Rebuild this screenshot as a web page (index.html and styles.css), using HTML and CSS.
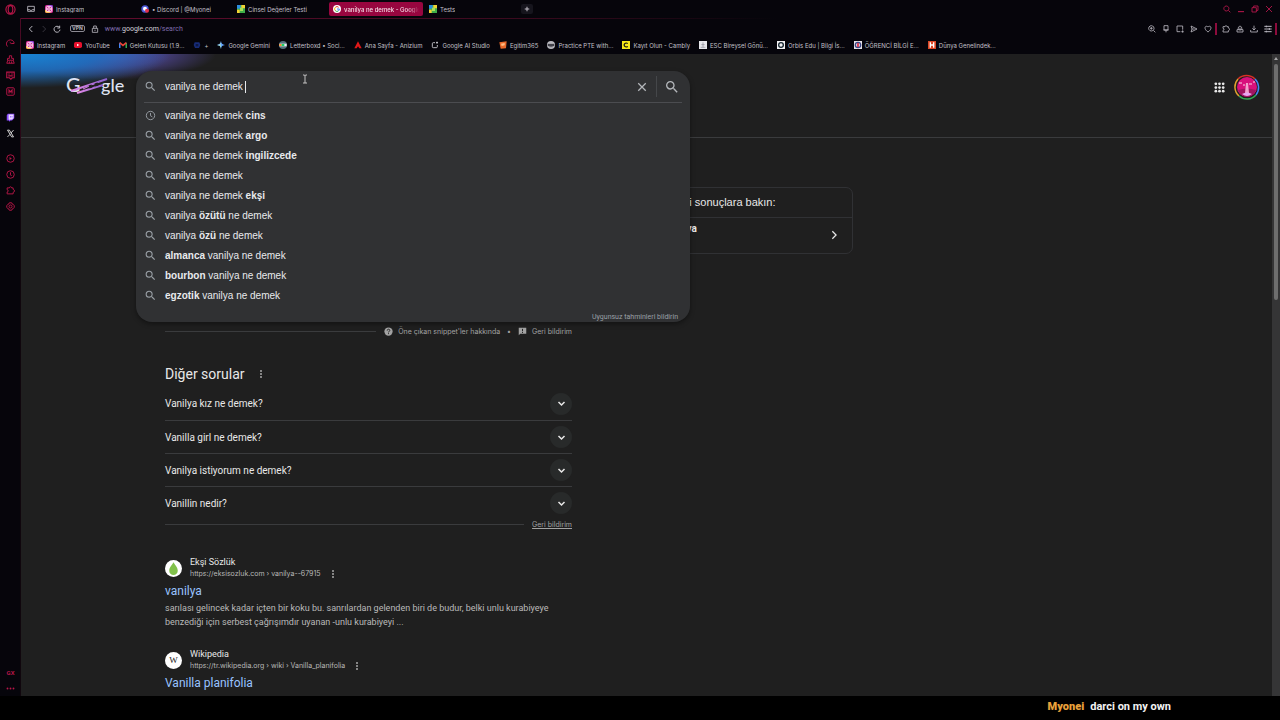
FILE: index.html
```
<!DOCTYPE html>
<html lang="tr">
<head>
    <meta charset="UTF-8">
    <meta name="viewport" content="width=device-width, initial-scale=1.0">
    <title>vanilya ne demek - Google</title>
    <link rel="stylesheet" href="styles.css">
</head>
<body>
    <svg class="sprite" aria-hidden="true">
        <symbol id="i-search" viewBox="0 0 24 24"><path fill="currentColor" d="M15.5 14h-.79l-.28-.27A6.47 6.47 0 0 0 16 9.5 6.5 6.5 0 1 0 9.5 16c1.61 0 3.09-.59 4.23-1.57l.27.28v.79l5 4.99L20.49 19l-4.99-5zm-6 0C7.01 14 5 11.99 5 9.5S7.01 5 9.5 5 14 7.01 14 9.5 11.99 14 9.5 14z"/></symbol>
        <symbol id="i-clock" viewBox="-2 -2 28 28"><g fill="none" stroke="currentColor" stroke-width="2"><circle cx="12" cy="12" r="9"/><path d="M12 6.500v6l4 2.500"/></g></symbol>
        <symbol id="i-down" viewBox="0 0 24 24"><path d="M4 8l8 8 8-8" fill="none" stroke="currentColor" stroke-width="4"/></symbol>
        <symbol id="i-dots" viewBox="0 0 24 24"><g fill="currentColor"><circle cx="12" cy="3" r="3"/><circle cx="12" cy="12" r="3"/><circle cx="12" cy="21" r="3"/></g></symbol>
        <symbol id="i-puzzle" viewBox="0 0 24 24"><path d="M3 5h6c0-4 6-4 6 0h4v4c5 1 5 7 0 8v4H3v-5c4 0 4-6 0-6z" fill="none" stroke="currentColor" stroke-width="2.500"/></symbol>
        <symbol id="i-insta" viewBox="0 0 24 24">
            <rect width="24" height="24" rx="5" fill="#d62f9b"/><path d="M0 14v5a5 5 0 0 0 5 5h14z" fill="#fdb344"/><path d="M8 0h11a5 5 0 0 1 5 5v4z" fill="#8a3bd8"/>
            <g fill="none" stroke="#fff" stroke-width="2.500"><rect x="4" y="4" width="16" height="16" rx="4"/><circle cx="12" cy="12" r="4"/></g>
        </symbol>
        <symbol id="i-test" viewBox="0 0 24 24"><path fill="#3fae49" d="M0 0h24v24H0z"/><path fill="#2b8fe0" d="M0 0h11v11H0z"/><path fill="#f3d233" d="M13 0h11v10H13zM0 14h8v10H0z"/><path fill="#a8e05a" d="M9 8h9v10H9z"/></symbol>
    </svg>

    <div class="browser">
        <nav class="rail" aria-label="Kenar çubuğu">
            <div class="rail-logo">
                <svg viewBox="0 0 24 24"><ellipse cx="12" cy="12" rx="10" ry="10" fill="none" stroke="currentColor" stroke-width="2.500"/><ellipse cx="12" cy="12" rx="5" ry="8.500" fill="none" stroke="currentColor" stroke-width="2.500"/></svg>
            </div>
            <div class="rail-group">
                <button aria-label="GX Control"><svg viewBox="0 0 24 24"><path d="M4 20A10.500 10.500 0 1 1 22 11M22 12h-8l-4-3" fill="none" stroke="currentColor" stroke-width="2.500"/></svg></button>
                <button aria-label="GX Cleaner"><svg viewBox="0 0 24 24"><path d="M9 2h6v7h5v5H4V9h5zM5 14l-3 8h20l-3-8M9 17v5M15 17v5" fill="none" stroke="currentColor" stroke-width="2.500"/></svg></button>
                <button aria-label="Mods"><svg viewBox="0 0 24 24"><path d="M2 3h20v15h-5l-4 4-4-4H2zM6 8h4M14 8h4M6 13h12" fill="none" stroke="currentColor" stroke-width="3"/></svg></button>
                <button aria-label="Aria"><svg viewBox="0 0 24 24"><rect x="2" y="2" width="20" height="20" rx="3" fill="none" stroke="currentColor" stroke-width="2.500"/><path d="M8 17V8l4 5 4-5v9" fill="none" stroke="currentColor" stroke-width="3"/></svg></button>
            </div>
            <div class="rail-group rail-apps">
                <button class="twitch" aria-label="Twitch"><svg viewBox="0 0 24 24"><path d="M5 2h17v12l-6 6h-4l-4 3v-3H2V6z" fill="#8a4dff"/><path d="M7 4h13v9l-4 4h-4l-3 2v-2H7z" fill="#e9dcff"/><path d="M12 8v4M16 8v4" stroke="#8a4dff" stroke-width="2"/></svg></button>
                <button class="x-app" aria-label="X"><svg viewBox="0 0 24 24"><path d="M4 3l11 18h5L9 3zM20 3l-7 8M11 14l-7 7" fill="none" stroke="currentColor" stroke-width="2.500"/></svg></button>
            </div>
            <div class="rail-group rail-tools">
                <button aria-label="Oynatıcı"><svg viewBox="0 0 24 24"><circle cx="12" cy="12" r="10" fill="none" stroke="currentColor" stroke-width="2.500"/><path d="M9.500 8v8l6-4z" fill="currentColor"/></svg></button>
                <button aria-label="Geçmiş"><svg viewBox="0 0 24 24"><g fill="none" stroke="currentColor" stroke-width="2.500"><circle cx="12" cy="12" r="10"/><path d="M12 6v7l3 3"/></g></svg></button>
                <button aria-label="Uzantılar"><svg><use href="#i-puzzle"/></svg></button>
                <button aria-label="Ayarlar"><svg viewBox="0 0 24 24"><path d="M9 2h6l1 3 3 1 3 4v4l-3 4-3 1-1 3H9l-1-3-3-1-3-4v-4l3-4 3-1z" fill="none" stroke="currentColor" stroke-width="2.500"/><circle cx="12" cy="12" r="4" fill="none" stroke="currentColor" stroke-width="2.500"/></svg></button>
            </div>
            <div class="rail-group rail-end">
                <button class="gx" aria-label="GX">GX</button>
                <button aria-label="Diğer"><svg viewBox="0 0 24 24"><g fill="currentColor"><circle cx="4" cy="12" r="2.500"/><circle cx="12" cy="12" r="2.500"/><circle cx="20" cy="12" r="2.500"/></g></svg></button>
            </div>
        </nav>

        <div class="window">
            <div class="tabs">
                <button class="island" aria-label="Sekmeler"><svg viewBox="0 0 24 24"><path d="M2 4h20v15H2zM2 14h6c0 3 8 3 8 0h6" fill="none" stroke="currentColor" stroke-width="2.500"/></svg></button>
                <a class="tab" href="#"><svg><use href="#i-insta"/></svg><span>Instagram</span></a>
                <a class="tab" href="#"><svg viewBox="0 0 24 24"><circle cx="12" cy="12" r="11" fill="#4c58d8"/><circle cx="12" cy="11" r="6" fill="#fff"/><circle cx="18" cy="17" r="6" fill="#e5304a"/></svg><span>• Discord | @Myonei</span></a>
                <a class="tab" href="#"><svg><use href="#i-test"/></svg><span>Cinsel Değerler Testi</span></a>
                <a class="tab active" href="#"><svg viewBox="0 0 24 24"><circle cx="12" cy="12" r="12" fill="#fff"/><g fill="none" stroke-width="3"><path d="M7 7a7 7 0 0 1 10 0" stroke="#ea4335"/><path d="M7 7a7 7 0 0 0 0 10" stroke="#fbbc04"/><path d="M7 17a7 7 0 0 0 9 1" stroke="#34a853"/><path d="M16 18a7 7 0 0 0 3-6h-7" stroke="#4285f4"/></g></svg><span>vanilya ne demek - Google</span></a>
                <a class="tab" href="#"><svg><use href="#i-test"/></svg><span>Tests</span></a>
                <button class="new-tab" aria-label="Yeni sekme"><svg viewBox="0 0 24 24"><path d="M12 3v18M3 12h18" stroke="currentColor" stroke-width="4"/></svg></button>
                <div class="window-controls">
                    <button aria-label="Ara"><svg viewBox="0 0 24 24"><path d="M16 16l6 6M10 3a7.500 7.500 0 1 0 .1 0z" fill="none" stroke="currentColor" stroke-width="2.500"/></svg></button>
                    <button aria-label="Küçült"><svg viewBox="0 0 24 24"><path d="M3 20h18" stroke="currentColor" stroke-width="3"/></svg></button>
                    <button aria-label="Geri yükle"><svg viewBox="0 0 24 24"><path d="M3 8h13v13H3zM8 8V3h13v13h-5" fill="none" stroke="currentColor" stroke-width="2.500"/></svg></button>
                    <button aria-label="Kapat"><svg viewBox="0 0 24 24"><path d="M3 3l18 18M21 3L3 21" stroke="currentColor" stroke-width="2.500"/></svg></button>
                </div>
            </div>

            <div class="address-bar">
                <button aria-label="Geri"><svg viewBox="0 0 24 24"><path d="M16 3l-9 9 9 9" fill="none" stroke="currentColor" stroke-width="3"/></svg></button>
                <button class="dim" aria-label="İleri"><svg viewBox="0 0 24 24"><path d="M8 3l9 9-9 9" fill="none" stroke="currentColor" stroke-width="3"/></svg></button>
                <button aria-label="Yenile"><svg viewBox="0 0 24 24"><path d="M19 7a9 9 0 1 0 2 7M20 2v7h-7" fill="none" stroke="currentColor" stroke-width="3"/></svg></button>
                <span class="vpn">VPN</span>
                <svg class="lock" viewBox="0 0 24 24"><path d="M4 10h16v12H4zM8 10V3h8v7M12 14v4" fill="none" stroke="currentColor" stroke-width="2.500"/></svg>
                <span class="url"><i>www.</i>google.com<i>/search</i></span>
                <div class="tools">
                    <button aria-label="Yakınlaştır"><svg viewBox="0 0 24 24"><path d="M16 16l6 6M10 2a8 8 0 1 0 .1 0zM6 10h8M10 6v8" fill="none" stroke="currentColor" stroke-width="2.500"/></svg></button>
                    <button aria-label="Sabitle"><svg viewBox="0 0 24 24"><path d="M6 2h12v13H6zM4 15h16M12 15v7" fill="none" stroke="currentColor" stroke-width="2.500"/></svg></button>
                    <button aria-label="Anlık görüntü"><svg viewBox="0 0 24 24"><path d="M13 20H3V3h17v11M20 16v7M16 20h7" fill="none" stroke="currentColor" stroke-width="2.500"/></svg></button>
                    <button aria-label="Gönder"><svg viewBox="0 0 24 24"><path d="M3 3l18 9-18 9 3-9zM6 12h8" fill="none" stroke="currentColor" stroke-width="2.500"/></svg></button>
                    <button aria-label="Beğen"><svg viewBox="0 0 24 24"><path d="M12 21C-4 10 5-1 12 6c7-7 16 4 0 15z" fill="none" stroke="currentColor" stroke-width="2.500"/></svg></button>
                </div>
                <div class="tools">
                    <button aria-label="Uzantılar"><svg><use href="#i-puzzle"/></svg></button>
                    <button aria-label="Profil"><svg viewBox="0 0 24 24"><path d="M3 14h18v7H3zM7 14c-3-14 13-14 10 0M12 8v9" fill="none" stroke="currentColor" stroke-width="2.500"/></svg></button>
                    <button aria-label="İndirilenler"><svg viewBox="0 0 24 24"><path d="M12 2v13M7 10l5 5 5-5M2 15v6h20v-6" fill="none" stroke="currentColor" stroke-width="2.500"/></svg></button>
                    <button aria-label="Menü"><svg viewBox="0 0 24 24"><path d="M1 4h22M1 12h22M1 20h22M7 2v5M16 9v6M7 17v5" fill="none" stroke="currentColor" stroke-width="3"/></svg></button>
                </div>
            </div>

            <nav class="bookmarks" aria-label="Yer imleri">
                <a href="#"><svg><use href="#i-insta"/></svg>Instagram</a>
                <a href="#"><svg viewBox="0 0 24 24"><rect y="3" width="24" height="18" rx="5" fill="#e8112d"/><path d="M9 8v8l7-4z" fill="#fff"/></svg>YouTube</a>
                <a href="#"><svg viewBox="0 0 24 24"><path d="M2 21V5" stroke="#4285f4" stroke-width="5"/><path d="M22 21V5" stroke="#34a853" stroke-width="5"/><path d="M2 5l10 8 10-8" fill="none" stroke="#ea4335" stroke-width="5"/></svg>Gelen Kutusu (1.9...</a>
                <a href="#"><svg viewBox="0 0 24 24"><path d="M5 4h14l3 8-4 9H6l-4-9z" fill="#172c78"/><path d="M8 9h8v7H8z" fill="#0d1844"/></svg>+</a>
                <a href="#"><svg viewBox="0 0 24 24"><path d="M12 0c1 8 4 11 12 12-8 1-11 4-12 12-1-8-4-11-12-12 8-1 11-4 12-12z" fill="#65a8ff"/><path d="M12 0c-1 8-4 11-12 12h12z" fill="#8fc4e8"/><path d="M12 24c-1-8-4-11-12-12h12z" fill="#9ed8c0"/></svg>Google Gemini</a>
                <a href="#"><svg viewBox="0 0 24 24"><circle cx="12" cy="12" r="12" fill="#55707c"/><path d="M1 8h22v8H1z" fill="#e7ecef"/><path d="M1 9h7v6H1z" fill="#ff8b24"/><path d="M8 9h8v6H8z" fill="#18d468"/></svg>Letterboxd • Soci...</a>
                <a href="#"><svg viewBox="0 0 24 24"><path d="M12 1l11 21h-7l-4-6-4 6H1z" fill="#e01818"/></svg>Ana Sayfa - Anizium</a>
                <a href="#"><svg viewBox="0 0 24 24"><path d="M12 5H7a3 3 0 0 0-3 3v9a3 3 0 0 0 3 3h9a3 3 0 0 0 3-3v-5M15 5h6M18 2v6" fill="none" stroke="#dcdce2" stroke-width="2.500"/></svg>Google AI Studio</a>
                <a href="#"><svg viewBox="0 0 24 24"><path d="M1 4l22-3-2 21-16 1z" fill="#e96829"/><path d="M6 8l11-2v7l-9 2z" fill="#ffc087"/></svg>Egitim365</a>
                <a href="#"><svg viewBox="0 0 24 24"><circle cx="12" cy="12" r="12" fill="#b8b8be"/><path d="M3 10h18v4H3zM7 17h10" fill="#33343c" stroke="#33343c" stroke-width="2"/></svg>Practice PTE with...</a>
                <a href="#"><svg viewBox="0 0 24 24"><path fill="#f6e81a" d="M0 0h24v24H0z"/><path d="M17 8a6 6 0 1 0 0 8" fill="none" stroke="#111" stroke-width="3.500"/></svg>Kayıt Olun - Cambly</a>
                <a href="#"><svg viewBox="0 0 24 24"><path fill="#e6e6ea" d="M0 0h24v24H0z"/><path d="M12 4v15M7 11h10M5 19h14" stroke="#8a8a94" stroke-width="2"/></svg>ESC Bireysel Gönü...</a>
                <a href="#"><svg viewBox="0 0 24 24"><path fill="#f2f2f4" d="M0 0h24v24H0z"/><circle cx="12" cy="12" r="7" fill="none" stroke="#15252f" stroke-width="4"/></svg>Orbis Edu | Bilgi İs...</a>
                <a href="#"><svg viewBox="0 0 24 24"><path fill="#e9e4ea" d="M0 0h24v24H0z"/><circle cx="12" cy="12" r="8" fill="none" stroke="#3a4683" stroke-width="4"/><path d="M12 6v12" stroke="#d42a44" stroke-width="5"/></svg>ÖĞRENCİ BİLGİ E...</a>
                <a href="#"><svg viewBox="0 0 24 24"><path fill="#dc4826" d="M0 0h24v24H0z"/><path d="M7 4v16M17 4v16M7 12h10" stroke="#fff" stroke-width="4"/></svg>Dünya Genelindek...</a>
            </nav>

            <div class="page">
                <div class="scroller">
                    <header class="header">
                        <a class="logo" href="#" aria-label="Google">
                            <svg viewBox="0 0 60 24">
                                <defs><linearGradient id="stripe"><stop offset="0" stop-color="#e58be8"/><stop offset="1" stop-color="#8c5fd0"/></linearGradient></defs>
                                <text x="-1" y="18" font-size="20">G</text>
                                <text x="34" y="18" font-size="18">gle</text>
                                <g stroke="url(#stripe)" stroke-width="2" fill="none"><path d="M4 17L40 5"/><path d="M10 19L36 11"/><path d="M16 15L33 7" stroke-width="1"/></g>
                                <path d="M22 13l3-1M28 11l3-1" stroke="#1f1f1f" stroke-width="3"/>
                            </svg>
                        </a>
                        <div class="account">
                            <button class="apps" aria-label="Google uygulamaları"><svg viewBox="0 0 24 24"><g fill="currentColor"><circle cx="4" cy="4" r="3"/><circle cx="12" cy="4" r="3"/><circle cx="20" cy="4" r="3"/><circle cx="4" cy="12" r="3"/><circle cx="12" cy="12" r="3"/><circle cx="20" cy="12" r="3"/><circle cx="4" cy="20" r="3"/><circle cx="12" cy="20" r="3"/><circle cx="20" cy="20" r="3"/></g></svg></button>
                            <button class="avatar" aria-label="Hesap">
                                <svg viewBox="0 0 26 26">
                                    <g fill="none" stroke-width="1.500"><path d="M4 5a12 12 0 0 1 17 0" stroke="#d93025"/><path d="M21 5a12 12 0 0 1 1 16" stroke="#4285f4"/><path d="M22 21a12 12 0 0 1-17 1" stroke="#34a853"/><path d="M5 22A12 12 0 0 1 4 5" stroke="#e0a030"/></g>
                                    <circle cx="13" cy="13" r="10" fill="#d8107c"/>
                                    <path d="M4 16q9-3 18 0-2 6-9 7-7-1-9-7z" fill="#a01560"/>
                                    <path d="M12 9h2l1 10h-4z" fill="#f2a0cc"/><path d="M8 20q5-3 10 0-5 4-10 0z" fill="#e9a6f2"/>
                                    <path d="M5 9h3M9 11h2M15 10h3M19 8h2" stroke="#ffd3ea" stroke-width="1"/>
                                </svg>
                            </button>
                        </div>
                    </header>

                    <form class="search" role="search">
                        <div class="search-row">
                            <svg class="icon"><use href="#i-search"/></svg>
                            <input type="text" value="vanilya ne demek" aria-label="Ara">
                            <span class="caret"></span>
                            <button class="clear" type="button" aria-label="Temizle"><svg viewBox="0 0 24 24"><path d="M3 3l18 18M21 3L3 21" stroke="currentColor" stroke-width="3"/></svg></button>
                            <button class="submit" type="submit" aria-label="Google'da Ara"><svg><use href="#i-search"/></svg></button>
                        </div>
                        <ul class="suggestions">
                            <li><svg class="icon"><use href="#i-clock"/></svg><span>vanilya ne demek <b>cins</b></span></li>
                            <li><svg class="icon"><use href="#i-search"/></svg><span>vanilya ne demek <b>argo</b></span></li>
                            <li><svg class="icon"><use href="#i-search"/></svg><span>vanilya ne demek <b>ingilizcede</b></span></li>
                            <li><svg class="icon"><use href="#i-search"/></svg><span>vanilya ne demek</span></li>
                            <li><svg class="icon"><use href="#i-search"/></svg><span>vanilya ne demek <b>ekşi</b></span></li>
                            <li><svg class="icon"><use href="#i-search"/></svg><span>vanilya <b>özütü</b> ne demek</span></li>
                            <li><svg class="icon"><use href="#i-search"/></svg><span>vanilya <b>özü</b> ne demek</span></li>
                            <li><svg class="icon"><use href="#i-search"/></svg><span><b>almanca</b> vanilya ne demek</span></li>
                            <li><svg class="icon"><use href="#i-search"/></svg><span><b>bourbon</b> vanilya ne demek</span></li>
                            <li><svg class="icon"><use href="#i-search"/></svg><span><b>egzotik</b> vanilya ne demek</span></li>
                        </ul>
                        <a class="report" href="#">Uygunsuz tahminleri bildirin</a>
                    </form>

                    <div class="content">
                        <main class="results">
                            <div class="snippet-footer">
                                <span class="rule"></span>
                                <a href="#"><svg viewBox="0 0 24 24"><circle cx="12" cy="12" r="11" fill="currentColor"/><path d="M8.500 9.500c0-5 7-4.500 7-.5 0 2.500-3.500 2.500-3.500 5.500M12 16.500v2.500" fill="none" stroke="#1f1f1f" stroke-width="2.500"/></svg>Öne çıkan snippet'ler hakkında</a>
                                <span class="dot">•</span>
                                <a href="#"><svg viewBox="0 0 24 24"><path d="M2 2h20v16H6l-4 4z" fill="currentColor"/><path d="M12 5v6M12 13v3" stroke="#1f1f1f" stroke-width="2.500"/></svg>Geri bildirim</a>
                            </div>

                            <section class="questions">
                                <h2>Diğer sorular <button class="more" aria-label="Bu sonuç hakkında"><svg><use href="#i-dots"/></svg></button></h2>
                                <button class="question"><span>Vanilya kız ne demek?</span><i><svg><use href="#i-down"/></svg></i></button>
                                <button class="question"><span>Vanilla girl ne demek?</span><i><svg><use href="#i-down"/></svg></i></button>
                                <button class="question"><span>Vanilya istiyorum ne demek?</span><i><svg><use href="#i-down"/></svg></i></button>
                                <button class="question"><span>Vanillin nedir?</span><i><svg><use href="#i-down"/></svg></i></button>
                                <div class="questions-footer"><span class="rule"></span><a href="#">Geri bildirim</a></div>
                            </section>

                            <article class="result">
                                <div class="source">
                                    <svg class="site-icon" viewBox="0 0 24 24"><circle cx="12" cy="12" r="12" fill="#fff"/><path d="M12 3c2 4 6 7 6 12a6 6 0 0 1-12 0c0-5 4-8 6-12z" fill="#81c14b"/></svg>
                                    <div>
                                        <div class="site">Ekşi Sözlük</div>
                                        <div class="path">https://eksisozluk.com › vanilya--67915 <button class="more" aria-label="Bu sonuç hakkında"><svg><use href="#i-dots"/></svg></button></div>
                                    </div>
                                </div>
                                <h3><a href="#">vanilya</a></h3>
                                <p>sarılası gelincek kadar içten bir koku bu. sanrılardan gelenden biri de budur, belki unlu kurabiyeye benzediği için serbest çağrışımdır uyanan -unlu kurabiyeyi ...</p>
                            </article>

                            <article class="result">
                                <div class="source">
                                    <span class="site-icon wiki">W</span>
                                    <div>
                                        <div class="site">Wikipedia</div>
                                        <div class="path">https://tr.wikipedia.org › wiki › Vanilla_planifolia <button class="more" aria-label="Bu sonuç hakkında"><svg><use href="#i-dots"/></svg></button></div>
                                    </div>
                                </div>
                                <h3><a href="#">Vanilla planifolia</a></h3>
                            </article>
                        </main>

                        <aside class="about">
                            <h2>Şununla ilgili sonuçlara bakın:</h2>
                            <a class="about-item" href="#">
                                <span class="thumb"></span>
                                <b>Vanilya</b>
                                <svg viewBox="0 0 24 24"><path d="M8 3l9 9-9 9" fill="none" stroke="currentColor" stroke-width="3"/></svg>
                            </a>
                        </aside>
                    </div>
                </div>
                <div class="scrollbar"><span class="arrow"></span><span class="thumb-bar"></span></div>
                <svg class="pointer" viewBox="0 0 6 10"><path d="M1 1h1.500l.5.500.5-.5H5M3 1v8M1 9h4" fill="none" stroke="#c4c4c4"/></svg>
            </div>
        </div>
    </div>

    <footer class="caption"><b>Myonei</b><span>darci on my own</span></footer>
</body>
</html>
```

FILE: styles.css
```
* {
    box-sizing: border-box;
}
body {
    margin: 0;
    height: 100vh;
    display: flex;
    flex-direction: column;
    overflow: hidden;
    background: #000;
    color: #e8e8e8;
    font-family: Roboto, "Liberation Sans", sans-serif;
    font-size: 10px;
}
a {
    color: inherit;
    text-decoration: none;
}
button {
    display: flex;
    align-items: center;
    justify-content: center;
    margin: 0;
    padding: 0;
    border: 0;
    background: none;
    color: inherit;
    font: inherit;
}
svg {
    display: block;
    flex: none;
}
h2, h3, p, ul {
    margin: 0;
    padding: 0;
    font-weight: normal;
}
.sprite {
    display: none;
}
.browser {
    flex: 1;
    min-height: 0;
    display: flex;
    background: #06050b;
}

/* left rail */
.rail {
    width: 21px;
    display: flex;
    flex-direction: column;
    color: #b81648;
    background: linear-gradient(#06050b 18px, #4d0a25 18px, #10060d 220px) no-repeat right / 1px 100%;
}
.rail svg {
    width: 9px;
    height: 9px;
}
.rail-logo {
    height: 18px;
    display: flex;
    align-items: center;
    justify-content: center;
    margin-bottom: 17px;
}
.rail-logo svg {
    width: 11px;
    height: 11px;
}
.rail-group button {
    width: 100%;
    height: 16px;
}
.rail-apps {
    margin-top: 10px;
}
.rail-tools {
    margin-top: 9px;
}
.rail-end {
    margin-top: auto;
}
.x-app {
    color: #ddd;
}
.gx {
    font-size: 6px;
    font-weight: bold;
}

/* browser chrome */
.window {
    flex: 1;
    min-width: 0;
    display: flex;
    flex-direction: column;
    font-family: Inter, Roboto, sans-serif;
    font-size: 6px;
}
.tabs {
    height: 18px;
    display: flex;
    align-items: center;
    gap: 2px;
    padding: 2px 4px;
    color: #c4c0ca;
}
.tabs svg {
    width: 8px;
    height: 8px;
}
.island {
    width: 12px;
    margin-right: 2px;
}
.tab {
    width: 94px;
    height: 14px;
    display: flex;
    align-items: center;
    gap: 3px;
    padding: 0 4px;
    border-radius: 2px;
    white-space: nowrap;
}
.tab span {
    overflow: hidden;
}
.tab.active {
    background: #98063f;
    color: #f3dbe4;
    font-weight: 500;
}
.tab.active span {
    mask-image: linear-gradient(90deg, #000 85%, transparent);
}
.new-tab {
    width: 12px;
    height: 10px;
    border-radius: 2px;
    background: #16151d;
}
.new-tab svg {
    width: 6px;
    height: 6px;
}
.window-controls {
    margin-left: auto;
    display: flex;
    color: #c0184f;
}
.window-controls button {
    width: 14px;
}
.address-bar {
    height: 20px;
    display: flex;
    align-items: center;
    border-top: 1px solid;
    border-image: linear-gradient(90deg, #6a0d30, #3a0a1e 40%, #06050b 60%) 1;
    padding: 0 3px;
    color: #b8b6be;
}
.address-bar svg {
    width: 8px;
    height: 8px;
}
.address-bar > button {
    width: 13px;
}
.address-bar .dim {
    color: #35333c;
}
.vpn {
    margin: 0 6px 0 7px;
    padding: 0 1px;
    border: 1px solid #8b8992;
    border-radius: 2px;
    font-size: 5px;
    line-height: 5px;
    font-weight: bold;
}
.url {
    margin-left: 6px;
    color: #d6d4dc;
    font-family: Roboto, sans-serif;
    font-size: 7px;
}
.url i {
    color: #7f6cab;
    font-style: normal;
}
.tools {
    display: flex;
    border-right: 2px solid #8c0c3c;
    padding: 2px 0 2px 2px;
}
.url + .tools {
    margin-left: auto;
}
.tools button {
    width: 14px;
}
.bookmarks {
    height: 16px;
    display: flex;
    align-items: center;
    gap: 9px;
    padding: 0 5px 2px;
    color: #c2c0c9;
    white-space: nowrap;
}
.bookmarks a {
    display: flex;
    align-items: center;
    gap: 3px;
}
.bookmarks svg {
    width: 8px;
    height: 8px;
}

/* web page */
.page {
    position: relative;
    flex: 1;
    min-height: 0;
    display: flex;
    background: #1f1f1f;
    font-family: Roboto, "Liberation Sans", sans-serif;
    font-size: 10px;
}
.scroller {
    position: relative;
    flex: 1;
    overflow: hidden;
}
.header {
    height: 84px;
    display: flex;
    justify-content: space-between;
    padding: 20px 12px 0 46px;
    border-bottom: 1px solid #3a3b3d;
    background:
        radial-gradient(ellipse 150px 34px at 0 0, #1884d4, rgba(30, 110, 190, .9) 50%, transparent),
        radial-gradient(ellipse 110px 26px at 85px 0, #5e56b4, rgba(80, 70, 150, .8) 50%, transparent);
}
.logo svg {
    width: 60px;
    height: 24px;
    overflow: visible;
    fill: #dfe3f2;
    font-family: Lato, sans-serif;
    font-weight: 500;
}
.account {
    display: flex;
    gap: 9px;
    height: 26px;
    align-items: center;
}
.apps svg {
    width: 11px;
    height: 11px;
}
.avatar svg {
    width: 26px;
    height: 26px;
}

/* search box with open suggestions */
.search {
    position: absolute;
    top: 17px;
    left: 115px;
    width: 554px;
    padding: 0 8px;
    border-radius: 16px;
    background: #303133;
    box-shadow: 0 2px 5px rgba(0, 0, 0, .4);
    font-family: "Liberation Sans", sans-serif;
}
.icon {
    width: 13px;
    height: 13px;
    color: #9aa0a6;
}
.search-row {
    height: 32px;
    display: flex;
    align-items: center;
    border-bottom: 1px solid #4b4c50;
}
.search-row input {
    field-sizing: content;
    margin-left: 8px;
    padding: 0;
    border: 0;
    outline: 0;
    background: none;
    color: #e8eaed;
    font: inherit;
}
.caret {
    width: 1px;
    height: 12px;
    margin-left: 2px;
    background: #e8eaed;
}
.clear {
    width: 30px;
    height: 21px;
    margin-left: auto;
    border-right: 1px solid #45474a;
    color: #b4b7bb;
}
.clear svg {
    width: 10px;
    height: 10px;
}
.submit {
    width: 25px;
    padding-left: 4px;
    color: #b4b7bb;
}
.submit svg {
    width: 16px;
    height: 16px;
}
.suggestions {
    list-style: none;
    padding-top: 2px;
}
.suggestions li {
    height: 20px;
    display: flex;
    align-items: center;
    gap: 8px;
    color: #e8eaed;
}
.report {
    display: block;
    margin: 7px 4px 0 0;
    color: #9aa0a6;
    font-family: Roboto, sans-serif;
    font-size: 7px;
    line-height: 10px;
    text-align: right;
}

/* results */
.content {
    display: flex;
    align-items: flex-start;
    gap: 41px;
    padding-left: 144px;
}
.results {
    flex: 0 1 407px;
    padding-top: 187px;
}
.rule {
    flex: 1;
    height: 1px;
    background: #3a3b3d;
}
.snippet-footer {
    display: flex;
    align-items: center;
    height: 12px;
    color: #a2a2a2;
    font-family: Inter, sans-serif;
    font-size: 7px;
}
.snippet-footer .rule {
    margin-right: 8px;
}
.snippet-footer a {
    display: flex;
    align-items: center;
    gap: 5px;
}
.snippet-footer svg {
    width: 9px;
    height: 9px;
}
.dot {
    margin: 0 7px;
}
.questions {
    margin-top: 24px;
}
.questions h2 {
    height: 26px;
    display: flex;
    align-items: center;
    gap: 12px;
    font-size: 14px;
}
.more svg {
    width: 8px;
    height: 8px;
    color: #a8a8a8;
}
.question {
    width: 100%;
    height: 33px;
    justify-content: space-between;
}
.question + .question {
    border-top: 1px solid #3a3b3d;
}
.question i {
    width: 22px;
    height: 22px;
    display: flex;
    align-items: center;
    justify-content: center;
    border-radius: 50%;
    background: #282a2a;
}
.question svg {
    width: 9px;
    height: 9px;
}
.questions-footer {
    height: 10px;
    display: flex;
    align-items: center;
    gap: 8px;
    color: #a2a2a2;
    font-family: Inter, sans-serif;
    font-size: 7px;
}
.questions-footer a {
    text-decoration: underline;
}
.result {
    margin-top: 27px;
    font-size: 9px;
}
.result + .result {
    margin-top: 19px;
}
.source {
    display: flex;
    align-items: center;
    gap: 8px;
    line-height: 12px;
}
.site-icon {
    width: 17px;
    height: 17px;
}
.wiki {
    border-radius: 50%;
    background: #fff;
    color: #222;
    font-family: "Liberation Serif", serif;
    line-height: 17px;
    text-align: center;
}
.path {
    display: flex;
    align-items: center;
    gap: 8px;
    color: #b8b8b8;
    font-family: Inter, sans-serif;
    font-size: 7px;
}
.result h3 {
    margin-top: 2px;
    color: #99c3ff;
    font-size: 12px;
    line-height: 18px;
}
.result p {
    margin-top: 1px;
    color: #bababa;
    line-height: 14px;
}
.about {
    flex: 0 1 240px;
    margin-top: 49px;
    border: 1px solid #303134;
    border-radius: 7px;
}
.about h2 {
    height: 30px;
    padding-left: 16px;
    border-bottom: 1px solid #303134;
    font-family: "Liberation Sans", sans-serif;
    font-size: 11px;
    line-height: 28px;
}
.about-item {
    height: 35px;
    display: flex;
    align-items: flex-start;
    padding: 5px 13px 0 12px;
}
.about-item svg {
    width: 10px;
    height: 10px;
    margin: 7px 0 0 auto;
}
.thumb {
    width: 28px;
    height: 24px;
    margin-right: 10px;
    border-radius: 4px;
    background: #5a4a2e;
}
.scrollbar {
    width: 8px;
    display: flex;
    flex-direction: column;
    align-items: center;
    gap: 4px;
    padding-top: 3px;
    background: #353536;
}
.arrow {
    border: 2px solid transparent;
    border-top: 0;
    border-bottom: 3px solid #a5a5a5;
}
.thumb-bar {
    width: 4px;
    height: 37%;
    border-radius: 2px;
    background: #6e6e6e;
}
.pointer {
    position: absolute;
    top: 20px;
    left: 281px;
    width: 6px;
    height: 10px;
}

/* caption strip */
.caption {
    height: 24px;
    display: flex;
    align-items: center;
    justify-content: flex-end;
    gap: 6px;
    padding: 0 109px 3px 0;
    color: #f2f2f2;
    font-size: 11px;
    font-weight: bold;
}
.caption b {
    color: #e9a13b;
}
```
